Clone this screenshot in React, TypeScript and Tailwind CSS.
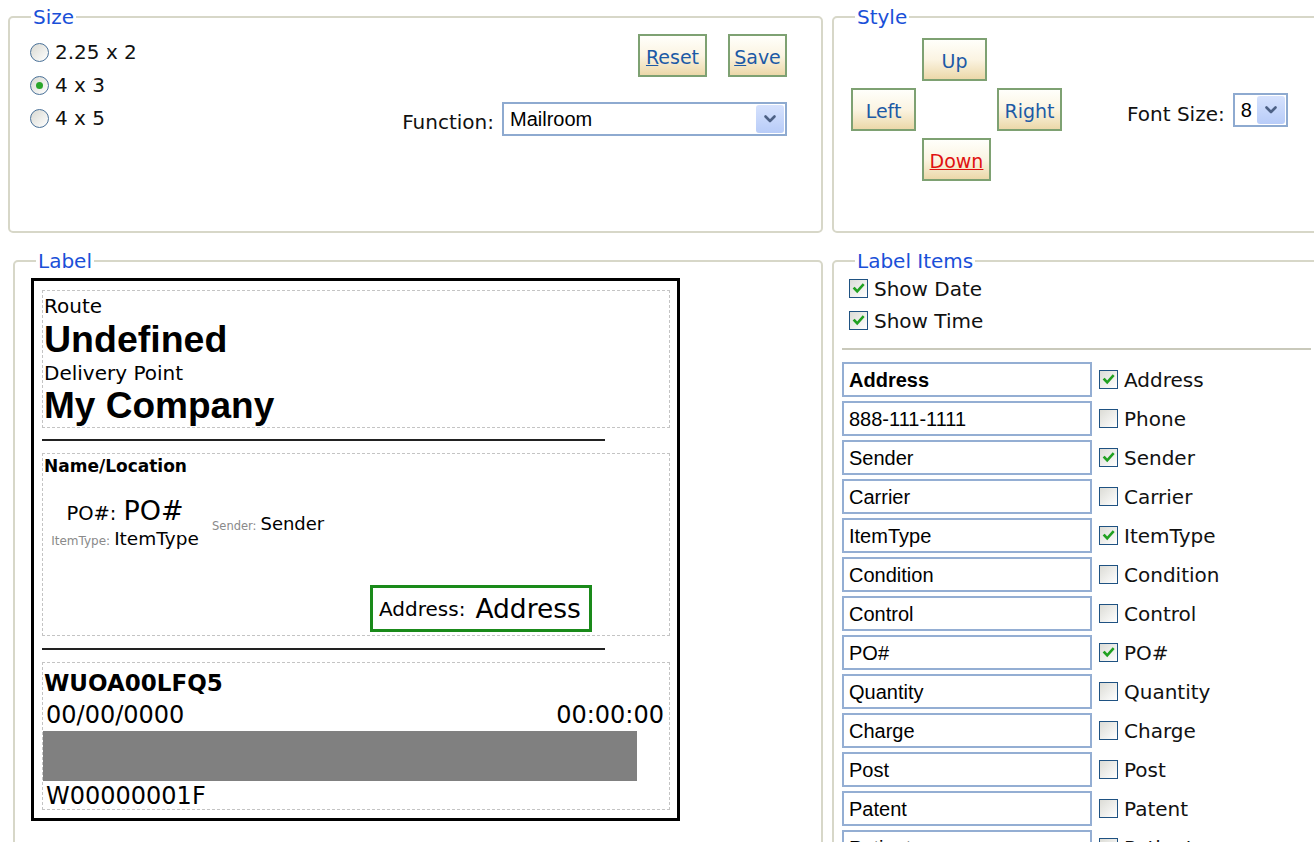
import React from "react";

const sans = "font-['DejaVu_Sans','Verdana',sans-serif]";
const arial = "font-['Liberation_Sans','Arial',sans-serif]";

function Fieldset({
  title,
  className = "",
  children,
}: {
  title: string;
  className?: string;
  children?: React.ReactNode;
}) {
  return (
    <fieldset className={`min-w-0 rounded-[5px] border-2 border-[#d7d7c8] ${className}`}>
      <legend className="ml-[21px] px-[2px] text-[20px] leading-[24px] text-[#1a50d8]">{title}</legend>
      {children}
    </fieldset>
  );
}

function Chevron() {
  return (
    <svg width="14" height="10" viewBox="0 0 14 10">
      <path
        d="M2.5 2.5 L7 7 L11.5 2.5"
        fill="none"
        stroke="#4d6185"
        strokeWidth="2.6"
        strokeLinecap="round"
        strokeLinejoin="round"
      />
    </svg>
  );
}

function Select({ value, className = "" }: { value: string; className?: string }) {
  return (
    <div className={`flex items-center border-2 border-[#8eaad0] bg-white ${className}`}>
      <span className={`flex-1 pl-[6px] ${arial} text-[20px] leading-none text-black`}>{value}</span>
      <span className="m-[1px] flex h-[28px] w-[28px] items-center justify-center rounded-[3px] bg-linear-to-b from-[#d6e2fd] to-[#b8ccf8]">
        <Chevron />
      </span>
    </div>
  );
}

function XpButton({ children, className = "" }: { children: React.ReactNode; className?: string }) {
  return (
    <button
      type="button"
      className={`flex h-[43px] items-center justify-center border-2 border-[#7ea172] bg-linear-to-b from-[#fffffb] via-[#fbf4e2] to-[#ecd8a9] text-[19px] text-[#1c5aa6] ${className}`}
    >
      {children}
    </button>
  );
}

function Radio({ checked = false }: { checked?: boolean }) {
  return (
    <span className="flex h-[19px] w-[19px] items-center justify-center rounded-full border-[1.5px] border-[#4a7198] bg-linear-to-br from-[#d9d9d2] to-white">
      {checked && <span className="h-[7px] w-[7px] rounded-full bg-[#2aa52a]" />}
    </span>
  );
}

function Check({ checked = false }: { checked?: boolean }) {
  return (
    <span className="flex h-[19px] w-[19px] shrink-0 items-center justify-center border-[1.5px] border-[#1f5282] bg-linear-to-br from-[#dcdcd6] to-white">
      {checked && (
        <svg width="13" height="13" viewBox="0 0 13 13">
          <path
            d="M2.5 6.5 L5.2 9.3 L10.8 3.2"
            fill="none"
            stroke="#21a121"
            strokeWidth="2.6"
            strokeLinecap="square"
          />
        </svg>
      )}
    </span>
  );
}

const sizes = [
  { label: "2.25 x 2", checked: false },
  { label: "4 x 3", checked: true },
  { label: "4 x 5", checked: false },
];

const items = [
  { field: "Address", name: "Address", on: true, bold: true },
  { field: "888-111-1111", name: "Phone", on: false },
  { field: "Sender", name: "Sender", on: true },
  { field: "Carrier", name: "Carrier", on: false },
  { field: "ItemType", name: "ItemType", on: true },
  { field: "Condition", name: "Condition", on: false },
  { field: "Control", name: "Control", on: false },
  { field: "PO#", name: "PO#", on: true },
  { field: "Quantity", name: "Quantity", on: false },
  { field: "Charge", name: "Charge", on: false },
  { field: "Post", name: "Post", on: false },
  { field: "Patent", name: "Patent", on: false },
  { field: "Patient", name: "Patient", on: false },
];

function LabelPreview() {
  return (
    <div className="h-[543px] w-[649px] border-[3px] border-black bg-white px-[8px] pt-[9px] text-black">
      {/* route / delivery block */}
      <div className="h-[138px] w-[628px] border border-dashed border-[#c4c4c4] px-[1px] pt-[4px]">
        <div className="text-[20px] leading-[22px]">Route</div>
        <div className={`${arial} text-[37.5px] font-bold leading-[45px]`}>Undefined</div>
        <div className="text-[20px] leading-[22px]">Delivery Point</div>
        <div className={`${arial} text-[37px] font-bold leading-[44px]`}>My Company</div>
      </div>
      <div className="mt-[11px] h-[2px] w-[563px] bg-[#222]" />

      {/* item fields */}
      <div className="mt-[12px] h-[183px] w-[628px] border border-dashed border-[#c4c4c4] px-[1px] pt-[2px]">
        <div className="text-[17px] font-bold leading-[20px]">Name/Location</div>
        <div className="mt-[20px] flex items-center">
          <div className="ml-[6px] flex w-[150px] flex-col items-center">
            <div className="flex items-baseline leading-[30px]">
              <span className="text-[19.5px]">PO#:</span>
              <span className="ml-[7px] text-[27px]">PO#</span>
            </div>
            <div className="flex items-baseline leading-[20px]">
              <span className="text-[12px] text-[#8a8a8a]">ItemType:</span>
              <span className="ml-[4px] text-[18.5px]">ItemType</span>
            </div>
          </div>
          <div className="ml-[12px] flex items-baseline">
            <span className="text-[11.5px] text-[#8a8a8a]">Sender:</span>
            <span className="ml-[4px] text-[18px]">Sender</span>
          </div>
        </div>
        <div className="ml-[326px] mt-[34px] flex h-[47px] w-[222px] items-center border-[3px] border-[#1a8a1a] pl-[6px]">
          <span className="text-[20px]">Address:</span>
          <span className="ml-[10px] text-[26.5px]">Address</span>
        </div>
      </div>
      <div className="mt-[12px] h-[2px] w-[563px] bg-[#222]" />

      {/* tracking block */}
      <div className="mt-[12px] h-[148px] w-[628px] border border-dashed border-[#c4c4c4] pt-[6px]">
        <div className="pl-[1px] text-[23px] font-bold leading-[28px]">WUOA00LFQ5</div>
        <div className="mt-[5px] flex justify-between pl-[3px] pr-[5px] text-[24px] leading-[26px]">
          <span>00/00/0000</span>
          <span>00:00:00</span>
        </div>
        <div className="mt-[3px] h-[50px] w-[594px] bg-[#808080]" />
        <div className="mt-[2px] pl-[3px] text-[24px] leading-[26px]">W00000001F</div>
      </div>
    </div>
  );
}

export default function App() {
  return (
    <div className={`h-[842px] w-[1314px] overflow-hidden bg-white ${sans} text-[20px] text-[#111]`}>
      <div className="grid grid-cols-[815px_489px] gap-x-[9px] gap-y-[16px] pl-[8px] pt-[5px]">
        {/* Size */}
        <Fieldset title="Size" className="h-[228px]">
          <div className="flex justify-between pl-[20px] pr-[34px]">
            <div className="mt-[13px] flex flex-col gap-[13px]">
              {sizes.map((s) => (
                <label key={s.label} className="flex h-[20px] items-center gap-[6px] leading-none">
                  <Radio checked={s.checked} />
                  <span>{s.label}</span>
                </label>
              ))}
            </div>
            <div className="mt-[5px] flex flex-col items-end">
              <div className="flex gap-[21px]">
                <XpButton className="w-[69px]">
                  <span className="mt-[3px]">
                    <span className="underline">R</span>eset
                  </span>
                </XpButton>
                <XpButton className="w-[59px]">
                  <span className="mt-[3px]">
                    <span className="underline">S</span>ave
                  </span>
                </XpButton>
              </div>
              <div className="mt-[23px] flex items-center gap-[8px]">
                <span className="mt-[7px]">Function:</span>
                <Select value="Mailroom" className="h-[34px] w-[285px]" />
              </div>
            </div>
          </div>
        </Fieldset>

        {/* Style */}
        <Fieldset title="Style" className="h-[228px]">
          <div className="flex items-center pl-[17px] pt-[9px]">
            <div className="grid grid-cols-[65px_69px_65px] grid-rows-[43px_43px_43px] gap-x-[6px] gap-y-[7px]">
              <div />
              <XpButton className="w-[65px]">
                <span className="mt-[3px]">Up</span>
              </XpButton>
              <div />
              <XpButton>
                <span className="mt-[3px]">Left</span>
              </XpButton>
              <div />
              <XpButton>
                <span className="mt-[3px]">Right</span>
              </XpButton>
              <div />
              <XpButton className="text-[#e01010]">
                <span className="mt-[3px] underline">Down</span>
              </XpButton>
              <div />
            </div>
            <div className="ml-[65px] flex items-center gap-[8px]">
              <span className="mt-[8px]">Font Size:</span>
              <Select value="8" className="h-[34px] w-[55px]" />
            </div>
          </div>
        </Fieldset>

        {/* Label */}
        <Fieldset title="Label" className="ml-[5px] h-[620px]">
          <div className="pl-[16px] pt-[5px]">
            <LabelPreview />
          </div>
        </Fieldset>

        {/* Label Items */}
        <Fieldset title="Label Items" className="h-[620px]">
          <div className="pt-[6px]">
            <div className="flex flex-col gap-[13px] pl-[15px]">
              <label className="flex h-[19px] items-center gap-[6px]">
                <Check checked />
                <span>Show Date</span>
              </label>
              <label className="flex h-[19px] items-center gap-[6px]">
                <Check checked />
                <span>Show Time</span>
              </label>
            </div>
            <div className="mx-[8px] mt-[18px] h-[2px] bg-[#c9c9bb]" />
            <div className="mt-[12px] flex flex-col gap-[4px] pl-[8px]">
              {items.map((it) => (
                <div key={it.name} className="flex items-center">
                  <div
                    className={`flex h-[35px] w-[250px] items-center border-2 border-[#94aed3] px-[5px] ${arial} text-[20px] text-black ${
                      it.bold ? "font-bold" : ""
                    }`}
                  >
                    {it.field}
                  </div>
                  <span className="ml-[7px]">
                    <Check checked={it.on} />
                  </span>
                  <span className="ml-[6px]">{it.name}</span>
                </div>
              ))}
            </div>
          </div>
        </Fieldset>
      </div>
    </div>
  );
}
